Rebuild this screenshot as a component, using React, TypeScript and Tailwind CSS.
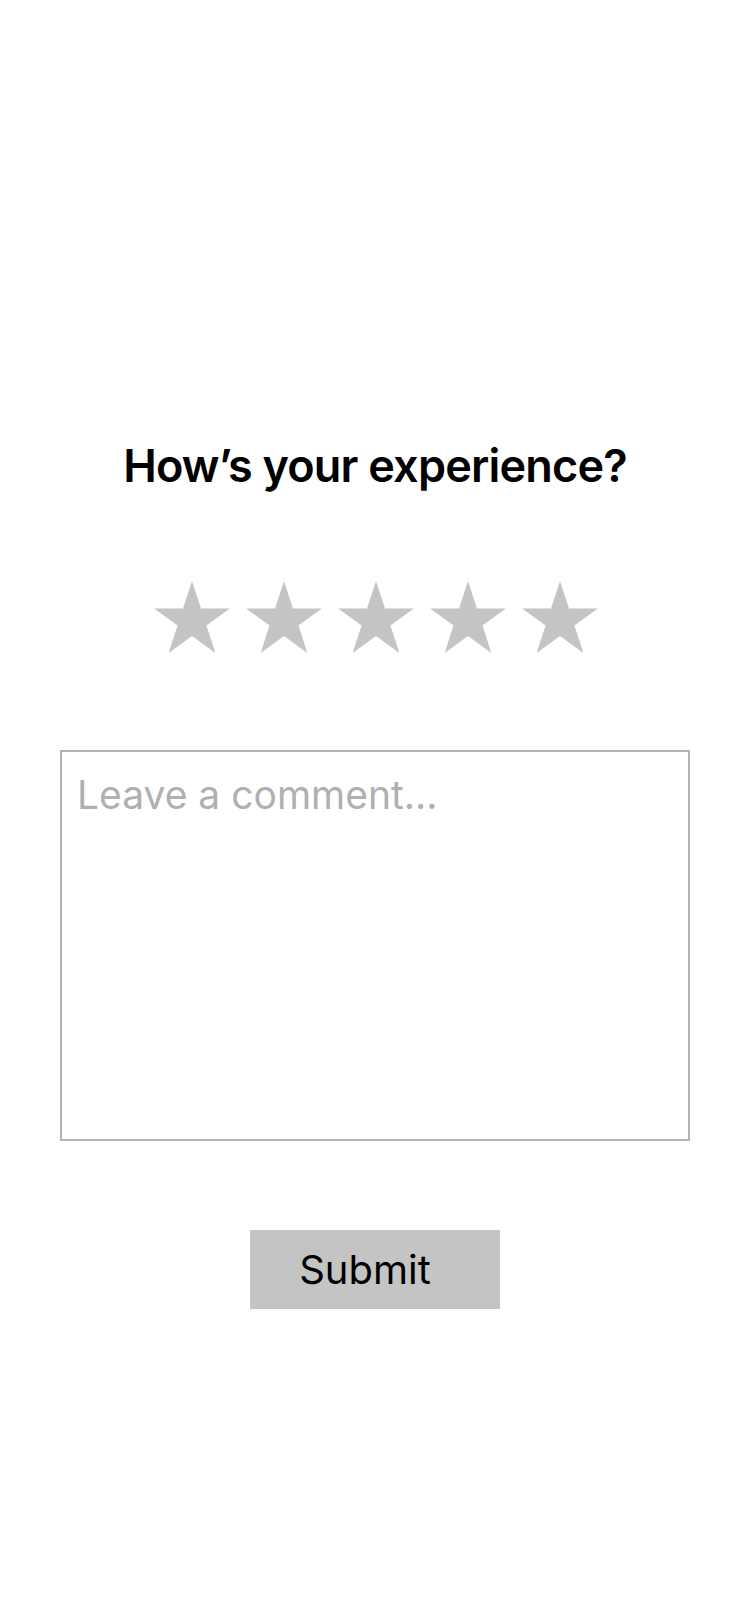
import React from "react";

function Star() {
  return (
    <svg width="76" height="72" viewBox="1.96 0 76.08 72.36" aria-hidden="true">
      <polygon
        fill="#c4c4c4"
        points="40,0 48.98,27.64 78.04,27.64 54.53,44.72 63.51,72.36 40,55.28 16.49,72.36 25.47,44.72 1.96,27.64 31.02,27.64"
      />
    </svg>
  );
}

export default function App() {
  return (
    <div
      className="w-[750px] min-h-[1624px] bg-white flex flex-col items-center pt-[443px]"
      style={{ fontFamily: "Inter, 'Liberation Sans', sans-serif" }}
    >
      <h1 className="text-[45px] leading-none font-semibold text-black tracking-[-0.8px]">
        How’s your experience?
      </h1>
      <div className="mt-[93px] flex gap-[16px] pl-[2px]">
        <Star />
        <Star />
        <Star />
        <Star />
        <Star />
      </div>
      <textarea
        placeholder="Leave a comment..."
        className="mt-[97px] w-[630px] h-[391px] border-2 border-[#b3b3b3] pl-[15px] pt-[19px] text-[39px] leading-tight text-black placeholder:text-[#b0b0b0] resize-none outline-none"
      />
      <button className="mt-[89px] w-[250px] h-[79px] bg-[#c4c4c4] text-black text-[40px] leading-none pr-[20px]">
        Submit
      </button>
    </div>
  );
}
